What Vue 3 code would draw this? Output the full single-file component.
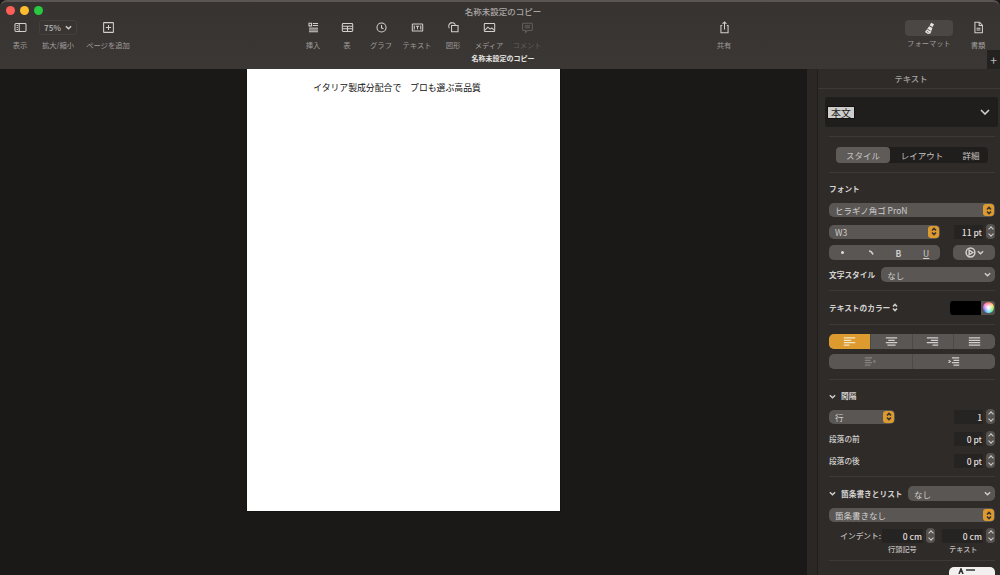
<script setup>
const leftTools = [
  { label: '表示', cls: 'w40', paths: ['M3 4h14a1.5 1.5 0 0 1 1.5 1.5v9A1.5 1.5 0 0 1 17 16H3a1.5 1.5 0 0 1-1.5-1.5v-9A1.5 1.5 0 0 1 3 4z', 'M8 4v12', 'M4 7h2M4 10h2M4 13h2'] },
]

const centerTools = [
  { label: '挿入', cls: 'w34', paths: ['M3 3.5h4v4H3z', 'M9 4h8M9 7h8', 'M3 11h14', 'M3 14h14M3 16.5h14'] },
  { label: '表', cls: 'w34', paths: ['M3.5 4h13A1.5 1.5 0 0 1 18 5.5v9a1.5 1.5 0 0 1-1.5 1.5h-13A1.5 1.5 0 0 1 2 14.5v-9A1.5 1.5 0 0 1 3.5 4z', 'M2 8h16M2 12h16M10 8v8'] },
  { label: 'グラフ', cls: 'w34', paths: ['M10 3a7 7 0 1 0 0 14 7 7 0 0 0 0-14z', 'M10 6v4.5l3 1.5'] },
  { label: 'テキスト', cls: 'w38', paths: ['M3 4.5h14A1 1 0 0 1 18 5.5v9a1 1 0 0 1-1 1H3a1 1 0 0 1-1-1v-9a1 1 0 0 1 1-1z', 'M7.5 8h5M10 8v4.5', 'M5 7v6M15 7v6'] },
  { label: '図形', cls: 'w34', paths: ['M8 2.5a5.5 5.5 0 0 0-4.5 8.6', 'M8 2.5a5.5 5.5 0 0 1 5 3.500', 'M7 7h10v9.500H7z'] },
  { label: 'メディア', cls: 'w38', paths: ['M3 4h14a1 1 0 0 1 1 1v10a1 1 0 0 1-1 1H3a1 1 0 0 1-1-1V5a1 1 0 0 1 1-1z', 'M3 14l4.5-4.500 3.500 3 2.500-2 3.500 3.500', 'M12.5 7.500h.01'] },
  { label: 'コメント', cls: 'w38 off', paths: ['M4 3.5h12a1.500 1.500 0 0 1 1.500 1.500v8a1.500 1.500 0 0 1-1.500 1.500h-6l-3 3v-3H4A1.500 1.500 0 0 1 2.500 13V5A1.500 1.500 0 0 1 4 3.500z', 'M6 7.500h8M6 10.500h8'] },
]

const alignIcons = [
  ['M1 1h14', 'M1 4h9', 'M1 7h14', 'M1 10h7'],
  ['M1 1h14', 'M4 4h8', 'M1 7h14', 'M3 10h10'],
  ['M1 1h14', 'M6 4h9', 'M1 7h14', 'M8 10h7'],
  ['M1 1h14', 'M1 4h14', 'M1 7h14', 'M1 10h14'],
]
</script>

<template>
  <div class="window">
    <header class="toolbar">
      <div class="lights">
        <span class="light red"></span>
        <span class="light yellow"></span>
        <span class="light green"></span>
      </div>
      <div class="doc-title">名称未設定のコピー</div>

      <div class="tools">
        <div v-for="t in leftTools" :key="t.label" class="tool" :class="t.cls">
          <svg width="13" height="13" viewBox="0 0 20 20" class="ico">
            <path v-for="d in t.paths" :key="d" :d="d" />
          </svg>
          <span>{{ t.label }}</span>
        </div>
        <div class="tool w36">
          <div class="zoom-box">75%<svg width="7" height="5" viewBox="0 0 8 5" class="ico thick"><path d="M1 1l3 3 3-3" /></svg></div>
          <span>拡大/縮小</span>
        </div>
        <div class="tool w64">
          <svg width="13" height="13" viewBox="0 0 20 20" class="ico">
            <path d="M3 2.500h14a.5.5 0 0 1 .5.500v14a.5.5 0 0 1-.5.500H3a.5.5 0 0 1-.5-.500V3a.5.5 0 0 1 .5-.500z" />
            <path d="M10 6v8M6 10h8" />
          </svg>
          <span>ページを追加</span>
        </div>

        <div class="center-group">
          <div v-for="t in centerTools" :key="t.label" class="tool" :class="t.cls">
            <svg width="13" height="13" viewBox="0 0 20 20" class="ico">
              <path v-for="d in t.paths" :key="d" :d="d" />
            </svg>
            <span>{{ t.label }}</span>
          </div>
        </div>

        <div class="tool w34 share">
          <svg width="13" height="13" viewBox="0 0 20 20" class="ico">
            <path d="M6.500 7H4.500v11h11V7h-2" />
            <path d="M10 13V2M7 4.500L10 1.500l3 3" />
          </svg>
          <span>共有</span>
        </div>
        <div class="tool format">
          <div class="format-pill">
            <svg width="13" height="13" viewBox="0 0 20 20">
              <path d="M12.500 1l4.500 2.500-2.200 4.200-4.500-2.500z" fill="#e8e6e4" />
              <path d="M9.500 6.500l5 2.700-3 8.300-4 1-4.500-3z" fill="#e8e6e4" />
              <path d="M6.500 11l5 2.700M6 14.500l2.500 1.500" stroke="#3a3735" stroke-width="1.200" />
            </svg>
          </div>
          <span>フォーマット</span>
        </div>
        <div class="tool w34 doc">
          <svg width="13" height="13" viewBox="0 0 20 20" class="ico">
            <path d="M4.500 2h7l4.500 4.500V18h-11.500z" />
            <path d="M11 2v5h5" />
            <path d="M7 11h6M7 14h6" />
          </svg>
          <span>書類</span>
        </div>
      </div>

      <div class="tab-title">名称未設定のコピー</div>
      <div class="tab-add">+</div>
    </header>

    <div class="main">
      <section class="canvas">
        <div class="page">
          <p class="page-text">イタリア製成分配合で　プロも選ぶ高品質</p>
        </div>
      </section>
      <div class="gutter"></div>

      <aside class="panel">
        <div class="panel-title">テキスト</div>

        <div class="style-wrap">
          <div class="style-box">
            <span class="style-name">本文</span>
            <svg width="10" height="6" viewBox="0 0 10 6" class="ico thick"><path d="M1 1l4 4 4-4" /></svg>
          </div>
        </div>

        <div class="section tabs-section">
          <div class="tabs">
            <span class="tab active">スタイル</span>
            <span class="tab">レイアウト</span>
            <span class="tab">詳細</span>
          </div>
        </div>

        <div class="section font-section">
          <div class="label bold font-head">フォント</div>
          <div class="select full">
            <span>ヒラギノ角ゴ ProN</span>
            <span class="arrows"><svg width="6" height="9" viewBox="0 0 6 9" class="ico dark"><path d="M1 3.500l2-2 2 2M1 5.500l2 2 2-2" /></svg></span>
          </div>
          <div class="row r-weight">
            <div class="select">
              <span>W3</span>
              <span class="arrows"><svg width="6" height="9" viewBox="0 0 6 9" class="ico dark"><path d="M1 3.500l2-2 2 2M1 5.500l2 2 2-2" /></svg></span>
            </div>
            <div class="field w29">11 pt</div>
            <div class="stepper"><i></i><b></b></div>
          </div>
          <div class="row r-buttons">
            <div class="btn-group">
              <span><em class="dot"></em></span>
              <span><svg width="6" height="6" viewBox="0 0 6 6" class="ico thick"><path d="M1 1c2 0 3 1 4 3.500" /></svg></span>
              <span class="b">B</span>
              <span class="u">U</span>
            </div>
            <div class="btn-single">
              <svg width="11" height="11" viewBox="0 0 12 12" class="ico"><circle cx="6" cy="6" r="4.800" /><path d="M4.500 3.500l4 2.500-4 2.500z" /></svg>
              <svg width="7" height="5" viewBox="0 0 8 5" class="ico"><path d="M1 1l3 3 3-3" /></svg>
            </div>
          </div>
          <div class="row r-charstyle">
            <div class="label bold nowrap">文字スタイル</div>
            <div class="select plain grow">
              <span>なし</span>
              <svg width="7" height="5" viewBox="0 0 8 5" class="ico thick"><path d="M1 1l3 3 3-3" /></svg>
            </div>
          </div>
        </div>

        <div class="section color-section">
          <div class="label bold">テキストのカラー
            <svg width="6" height="9" viewBox="0 0 6 9" class="ico"><path d="M1 3.500l2-2 2 2M1 5.500l2 2 2-2" /></svg>
          </div>
          <div class="swatch">
            <span class="swatch-black"></span>
            <span class="swatch-wheel-box"><span class="swatch-wheel"></span></span>
          </div>
        </div>

        <div class="section align-section">
          <div class="seg">
            <span v-for="(icon, i) in alignIcons" :key="i" :class="{ on: i === 0 }">
              <svg width="13" height="9" viewBox="0 0 16 11" class="ico">
                <path v-for="d in icon" :key="d" :d="d" />
              </svg>
            </span>
          </div>
          <div class="seg two">
            <span class="dim">
              <svg width="13" height="9" viewBox="0 0 16 11" class="ico">
                <path d="M1 1h9M1 4h7M1 7h9M1 10h7M14 4l-2 1.500 2 1.500" />
              </svg>
            </span>
            <span>
              <svg width="13" height="9" viewBox="0 0 16 11" class="ico">
                <path d="M6 1h9M8 4h7M6 7h9M8 10h7M2 4l2 1.500-2 1.500" />
              </svg>
            </span>
          </div>
        </div>

        <div class="section spacing-section">
          <div class="label bold disclosure">
            <svg width="7" height="5" viewBox="0 0 8 5" class="ico"><path d="M1 1l3 3 3-3" /></svg>
            間隔
          </div>
          <div class="row r-line">
            <div class="select short">
              <span>行</span>
              <span class="arrows"><svg width="6" height="9" viewBox="0 0 6 9" class="ico dark"><path d="M1 3.500l2-2 2 2M1 5.500l2 2 2-2" /></svg></span>
            </div>
            <div class="push"></div>
            <div class="field w29">1</div>
            <div class="stepper"><i></i><b></b></div>
          </div>
          <div class="row r-para">
            <div class="label">段落の前</div>
            <div class="push"></div>
            <div class="field w29">0 pt</div>
            <div class="stepper"><i></i><b></b></div>
          </div>
          <div class="row r-para">
            <div class="label">段落の後</div>
            <div class="push"></div>
            <div class="field w29">0 pt</div>
            <div class="stepper"><i></i><b></b></div>
          </div>
        </div>

        <div class="section list-section">
          <div class="row r-list">
            <div class="label bold disclosure nowrap">
              <svg width="7" height="5" viewBox="0 0 8 5" class="ico"><path d="M1 1l3 3 3-3" /></svg>
              箇条書きとリスト
            </div>
            <div class="push"></div>
            <div class="select plain list-select">
              <span>なし</span>
              <svg width="7" height="5" viewBox="0 0 8 5" class="ico thick"><path d="M1 1l3 3 3-3" /></svg>
            </div>
          </div>
          <div class="select full">
            <span>箇条書きなし</span>
            <span class="arrows"><svg width="6" height="9" viewBox="0 0 6 9" class="ico dark"><path d="M1 3.500l2-2 2 2M1 5.500l2 2 2-2" /></svg></span>
          </div>
          <div class="row r-indent">
            <div class="label indent-label">インデント:</div>
            <div class="field w41">0 cm</div>
            <div class="stepper"><i></i><b></b></div>
            <div class="field w41 second">0 cm</div>
            <div class="stepper"><i></i><b></b></div>
          </div>
          <div class="row r-sub">
            <span class="sub first">行頭記号</span>
            <span class="sub">テキスト</span>
          </div>
        </div>

        <div class="section last">
          <div class="white-btn">
            <svg width="20" height="6" viewBox="0 0 20 6" class="ico dark"><path d="M2 6l2-5 2 5M9 2h9" /></svg>
          </div>
        </div>
      </aside>
    </div>
  </div>
</template>

<style>
html, body {
  margin: 0;
  background: #1b1918;
}
</style>

<style scoped>
.window {
  width: 1000px;
  height: 575px;
  overflow: hidden;
  display: flex;
  flex-direction: column;
  font-family: "Noto Sans CJK JP", "Noto Sans", sans-serif;
  font-size: 8px;
  color: #c9c7c5;
  background: #1b1918;
}
svg {
  display: block;
  flex: none;
}
.ico {
  fill: none;
  stroke: #d2d0ce;
  stroke-width: 1.600;
}
.ico.thick {
  stroke-width: 1.600;
}
.ico.dark {
  stroke: #333;
}

/* toolbar */
.toolbar {
  position: relative;
  flex: none;
  height: 67px;
  background: linear-gradient(#363331, #3a3735);
  border-top: 2px solid #5a5552;
  border-radius: 7px 7px 0 0;
}
.lights {
  position: absolute;
  left: 6px;
  top: 4px;
  display: flex;
  gap: 5px;
}
.light {
  width: 9px;
  height: 9px;
  border-radius: 50%;
}
.red { background: #fe5f57; }
.yellow { background: #febc2e; }
.green { background: #28c840; }
.doc-title {
  position: absolute;
  left: 0;
  right: -6px;
  top: 3px;
  text-align: center;
  font-size: 8.500px;
  font-weight: 500;
  color: #a9a6a4;
}
.tools {
  display: flex;
  padding-top: 19px;
}
.tool {
  display: flex;
  flex-direction: column;
  align-items: center;
  flex: none;
  gap: 6px;
  font-size: 7.300px;
  line-height: 10px;
  color: #a09d9b;
  white-space: nowrap;
}
.tool > span {
  display: block;
}
.w34 { width: 34px; }
.w36 { width: 36px; }
.w38 { width: 38px; }
.w40 { width: 40px; }
.w64 { width: 64px; }
.tool.off,
.tool.off .ico {
  color: #615e5c;
  stroke: #615e5c;
}
.center-group {
  display: flex;
  margin-left: 156px;
}
.zoom-box {
  display: flex;
  align-items: center;
  justify-content: center;
  gap: 4px;
  width: 38px;
  height: 15px;
  margin: -1px 0 -1px;
  border: 1px solid #423f3d;
  border-radius: 3px;
  box-sizing: border-box;
  font-size: 8px;
  font-weight: 700;
  color: #a8a5a3;
}
.share { margin-left: 161px; }
.format {
  width: 48px;
  margin-left: 164px;
  gap: 2px;
  margin-top: -1px;
}
.format-pill {
  width: 48px;
  height: 16px;
  border-radius: 4px;
  background: #4a4745;
  display: flex;
  align-items: center;
  justify-content: center;
}
.doc { margin-left: 8px; }
.tab-title {
  position: absolute;
  left: 0;
  right: -6px;
  top: 51px;
  text-align: center;
  font-size: 7px;
  font-weight: 700;
  color: #e6e4e2;
}
.tab-add {
  position: absolute;
  right: 0;
  bottom: 0;
  width: 13px;
  height: 19px;
  background: #242220;
  color: #bdbbb9;
  font-size: 12px;
  line-height: 19px;
  text-align: center;
}

/* canvas */
.main {
  flex: 1;
  display: flex;
  min-height: 0;
}
.canvas {
  width: 807px;
  flex: none;
  background: #1b1918;
}
.page {
  width: 313px;
  height: 442px;
  margin-left: 247px;
  background: #fff;
  box-shadow: 0 0 1px #000;
}
.page-text {
  margin: 0;
  padding-top: 13px;
  padding-right: 13px;
  text-align: center;
  font-family: "Liberation Serif", "Noto Sans CJK JP", serif;
  font-size: 8.850px;
  line-height: 13px;
  color: #111;
}
.gutter {
  width: 11px;
  flex: none;
  background: #2a2725;
  border-right: 1px solid #201e1d;
  box-sizing: border-box;
}

/* inspector */
.panel {
  flex: 1;
  background: #2e2b29;
  display: flex;
  flex-direction: column;
  min-width: 0;
  overflow: hidden;
}
.panel > * {
  flex: none;
}
.panel-title {
  height: 19px;
  line-height: 19px;
  padding-left: 4px;
  text-align: center;
  font-size: 8.300px;
  font-weight: 500;
  color: #a7a4a2;
  border-bottom: 1px solid #3c3937;
}
.style-wrap {
  padding: 8px 2px 9px 7px;
}
.style-box {
  height: 30px;
  background: #201e1d;
  border-radius: 3px;
  display: flex;
  align-items: center;
  justify-content: space-between;
  padding-right: 8px;
}
.style-name {
  margin-left: 3px;
  padding: 0 3px;
  background: #cfcdcb;
  color: #222;
  font-size: 10px;
  line-height: 11px;
  box-shadow: 0 0 0 1px #111;
}
.section {
  margin: 0 5px 0 11px;
  border-top: 1px solid #3c3937;
}
.tabs-section {
  padding: 10px 7px 9px;
}
.tabs {
  display: flex;
  align-items: center;
  height: 16px;
  background: #201e1d;
  border-radius: 4px;
  font-size: 8.500px;
  color: #c5c3c1;
}
.tab {
  text-align: center;
  width: 54px;
  line-height: 16px;
}
.tab:nth-child(2) { width: 64px; }
.tab:nth-child(3) { width: 34px; }
.tab.active {
  background: #5e5b59;
  border-radius: 4px;
}
.label {
  font-size: 7.700px;
  line-height: 12px;
  color: #c0bebc;
}
.label.bold {
  font-weight: 700;
  color: #d4d2d0;
}
.nowrap {
  white-space: nowrap;
}
.row {
  display: flex;
  align-items: center;
}
.push {
  flex: 1;
}
.select {
  height: 14px;
  display: flex;
  align-items: center;
  justify-content: space-between;
  padding: 0 1px 0 6px;
  background: #595654;
  border-radius: 5px;
  font-size: 8.500px;
  color: #d0cecc;
  box-sizing: border-box;
}
.select.plain {
  padding-right: 4px;
  height: 15px;
}
.select.full {
  width: 166px;
}
.select.grow {
  flex: 1;
  min-width: 0;
}
.select.short {
  width: 66px;
}
.list-select {
  width: 87px;
  flex: none;
}
.arrows {
  width: 11px;
  height: 12px;
  display: flex;
  align-items: center;
  justify-content: center;
  background: #dd9a2e;
  border-radius: 3px;
}
.field {
  height: 14px;
  line-height: 14px;
  text-align: right;
  padding-right: 1px;
  background: #262422;
  font-size: 8.500px;
  font-weight: 500;
  color: #e0dedc;
  box-sizing: border-box;
}
.w29 { width: 29px; }
.w41 { width: 41px; }
.stepper {
  position: relative;
  width: 9px;
  height: 15px;
  margin-left: 3px;
  background: #55524f;
  border-radius: 4px;
  flex: none;
}
.stepper i,
.stepper b {
  position: absolute;
  left: 2.500px;
  width: 4px;
  height: 4px;
  border-left: 1px solid #d0cecc;
  border-top: 1px solid #d0cecc;
  transform: rotate(45deg);
  box-sizing: border-box;
}
.stepper i { top: 3px; }
.stepper b { bottom: 3px; transform: rotate(225deg); }

.font-section {
  padding: 10px 0 8px;
}
.font-head {
  margin-bottom: 8px;
}
.r-weight {
  margin-top: 7px;
}
.r-weight .select {
  flex: none;
  width: 111px;
  margin-right: 14px;
}
.r-buttons {
  margin-top: 6px;
  justify-content: space-between;
}
.btn-group {
  width: 111px;
  height: 15px;
  display: flex;
  background: #595654;
  border-radius: 5px;
  font-size: 8.500px;
  font-weight: 700;
  color: #d0cecc;
}
.btn-group span {
  flex: 1;
  display: flex;
  align-items: center;
  justify-content: center;
}
.btn-group .u {
  text-decoration: underline;
  font-weight: 400;
}
.dot {
  width: 3px;
  height: 3px;
  border-radius: 50%;
  background: #dedcda;
}
.btn-single {
  width: 42px;
  height: 15px;
  display: flex;
  align-items: center;
  justify-content: center;
  gap: 1px;
  background: #595654;
  border-radius: 5px;
}
.r-charstyle {
  margin-top: 7px;
  gap: 6px;
}

.color-section {
  display: flex;
  align-items: center;
  justify-content: space-between;
  height: 33px;
}
.color-section .label {
  display: flex;
  align-items: center;
  gap: 2px;
}
.swatch {
  display: flex;
  width: 45px;
  height: 14px;
  border-radius: 3px;
  overflow: hidden;
}
.swatch-black {
  flex: 1;
  background: #000;
}
.swatch-wheel-box {
  width: 14px;
  background: #55524f;
  display: flex;
  align-items: center;
  justify-content: center;
}
.swatch-wheel {
  width: 11px;
  height: 11px;
  border-radius: 50%;
  background: radial-gradient(circle, #fff 10%, transparent 70%), conic-gradient(#f66, #fc5, #6e6, #5df, #66f, #f6d, #f66);
}

.align-section {
  padding: 9px 0 10px;
}
.seg {
  display: flex;
  width: 166px;
  height: 15px;
  background: #595654;
  border-radius: 5px;
  overflow: hidden;
}
.seg span {
  flex: 1;
  display: flex;
  align-items: center;
  justify-content: center;
  border-left: 1px solid #4c4947;
}
.seg span:first-child {
  border-left: 0;
}
.seg .on {
  background: #dd9a2e;
}
.seg .on .ico {
  stroke: #f3e4c5;
}
.seg .dim .ico {
  stroke: #85827f;
}
.seg.two {
  margin-top: 5px;
}

.spacing-section {
  padding: 10px 0 8px;
}
.disclosure {
  display: flex;
  align-items: center;
  gap: 5px;
}
.r-line {
  margin-top: 7px;
}
.r-para {
  margin-top: 7px;
}
.r-para .label {
  color: #d0cecc;
  font-weight: 500;
}

.list-section {
  padding: 9px 0 5px;
}
.r-list {
  margin-bottom: 7px;
}
.r-indent {
  margin-top: 6px;
}
.indent-label {
  width: 53px;
  text-align: right;
  padding-right: 1px;
  box-sizing: border-box;
  font-weight: 500;
}
.field.second {
  margin-left: 7px;
}
.r-sub {
  padding-top: 1px;
}
.sub {
  font-size: 7.200px;
  line-height: 11px;
  color: #c0bebc;
  font-weight: 500;
}
.sub.first {
  margin-left: 59px;
  width: 61px;
}
.last {
  padding-top: 6px;
}
.white-btn {
  width: 46px;
  height: 20px;
  margin-left: 120px;
  background: #f2f1f0;
  border-radius: 5px;
  padding: 1px 0 0 8px;
  box-sizing: border-box;
}
</style>
